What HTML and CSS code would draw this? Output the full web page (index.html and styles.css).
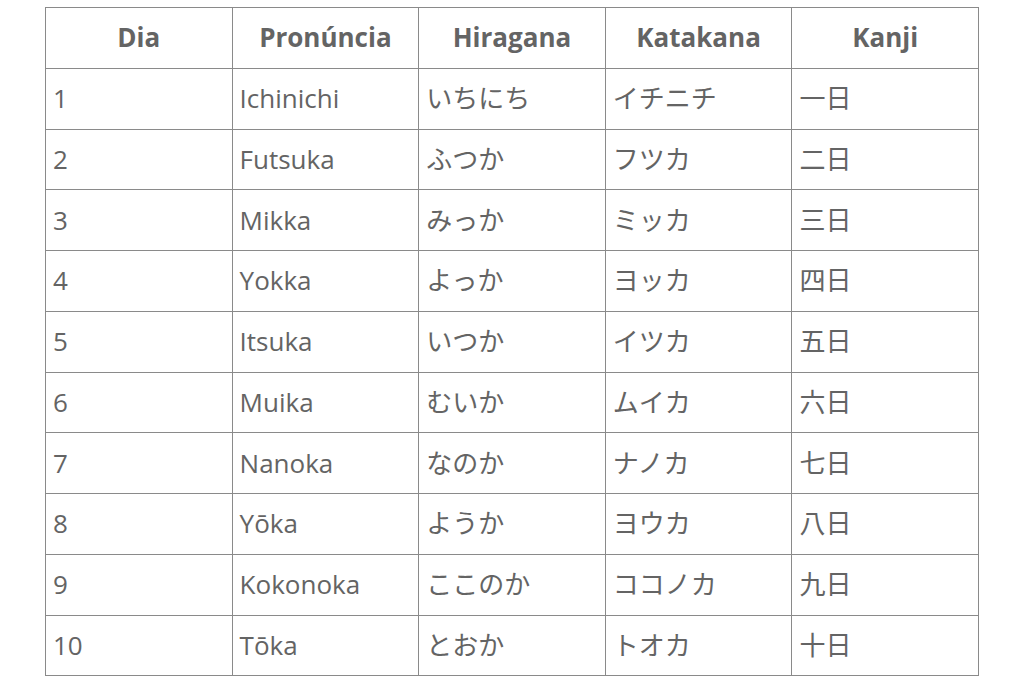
FILE: index.html
```html
<!DOCTYPE html>
<html lang="pt">
<head>
<meta charset="utf-8">
<title>Dias</title>
<link rel="stylesheet" href="styles.css">
</head>
<body>
<table class="days">
  <thead>
    <tr><th>Dia</th><th>Pronúncia</th><th>Hiragana</th><th>Katakana</th><th>Kanji</th></tr>
  </thead>
  <tbody>
    <tr><td>1</td><td>Ichinichi</td><td>いちにち</td><td>イチニチ</td><td>一日</td></tr>
    <tr><td>2</td><td>Futsuka</td><td>ふつか</td><td>フツカ</td><td>二日</td></tr>
    <tr><td>3</td><td>Mikka</td><td>みっか</td><td>ミッカ</td><td>三日</td></tr>
    <tr><td>4</td><td>Yokka</td><td>よっか</td><td>ヨッカ</td><td>四日</td></tr>
    <tr><td>5</td><td>Itsuka</td><td>いつか</td><td>イツカ</td><td>五日</td></tr>
    <tr><td>6</td><td>Muika</td><td>むいか</td><td>ムイカ</td><td>六日</td></tr>
    <tr><td>7</td><td>Nanoka</td><td>なのか</td><td>ナノカ</td><td>七日</td></tr>
    <tr><td>8</td><td>Yōka</td><td>ようか</td><td>ヨウカ</td><td>八日</td></tr>
    <tr><td>9</td><td>Kokonoka</td><td>ここのか</td><td>ココノカ</td><td>九日</td></tr>
    <tr><td>10</td><td>Tōka</td><td>とおか</td><td>トオカ</td><td>十日</td></tr>
  </tbody>
</table>
</body>
</html>
```
FILE: styles.css
```css
html, body {
  margin: 0;
  padding: 0;
  background: #ffffff;
}
body {
  padding: 7px 0 0 45px;
  font-family: "Open Sans", "Noto Sans CJK JP", sans-serif;
  color: #646464;
}
.days {
  border-collapse: collapse;
  table-layout: fixed;
  width: 934px;
  font-size: 26px;
}
.days th,
.days td {
  border: 1px solid #8a8a8a;
  height: 60.75px;
  box-sizing: border-box;
  padding: 0 7px;
  vertical-align: middle;
  line-height: 1.2;
}
.days th {
  font-weight: 700;
  text-align: center;
}
.days td {
  font-weight: 400;
  text-align: left;
}
```
